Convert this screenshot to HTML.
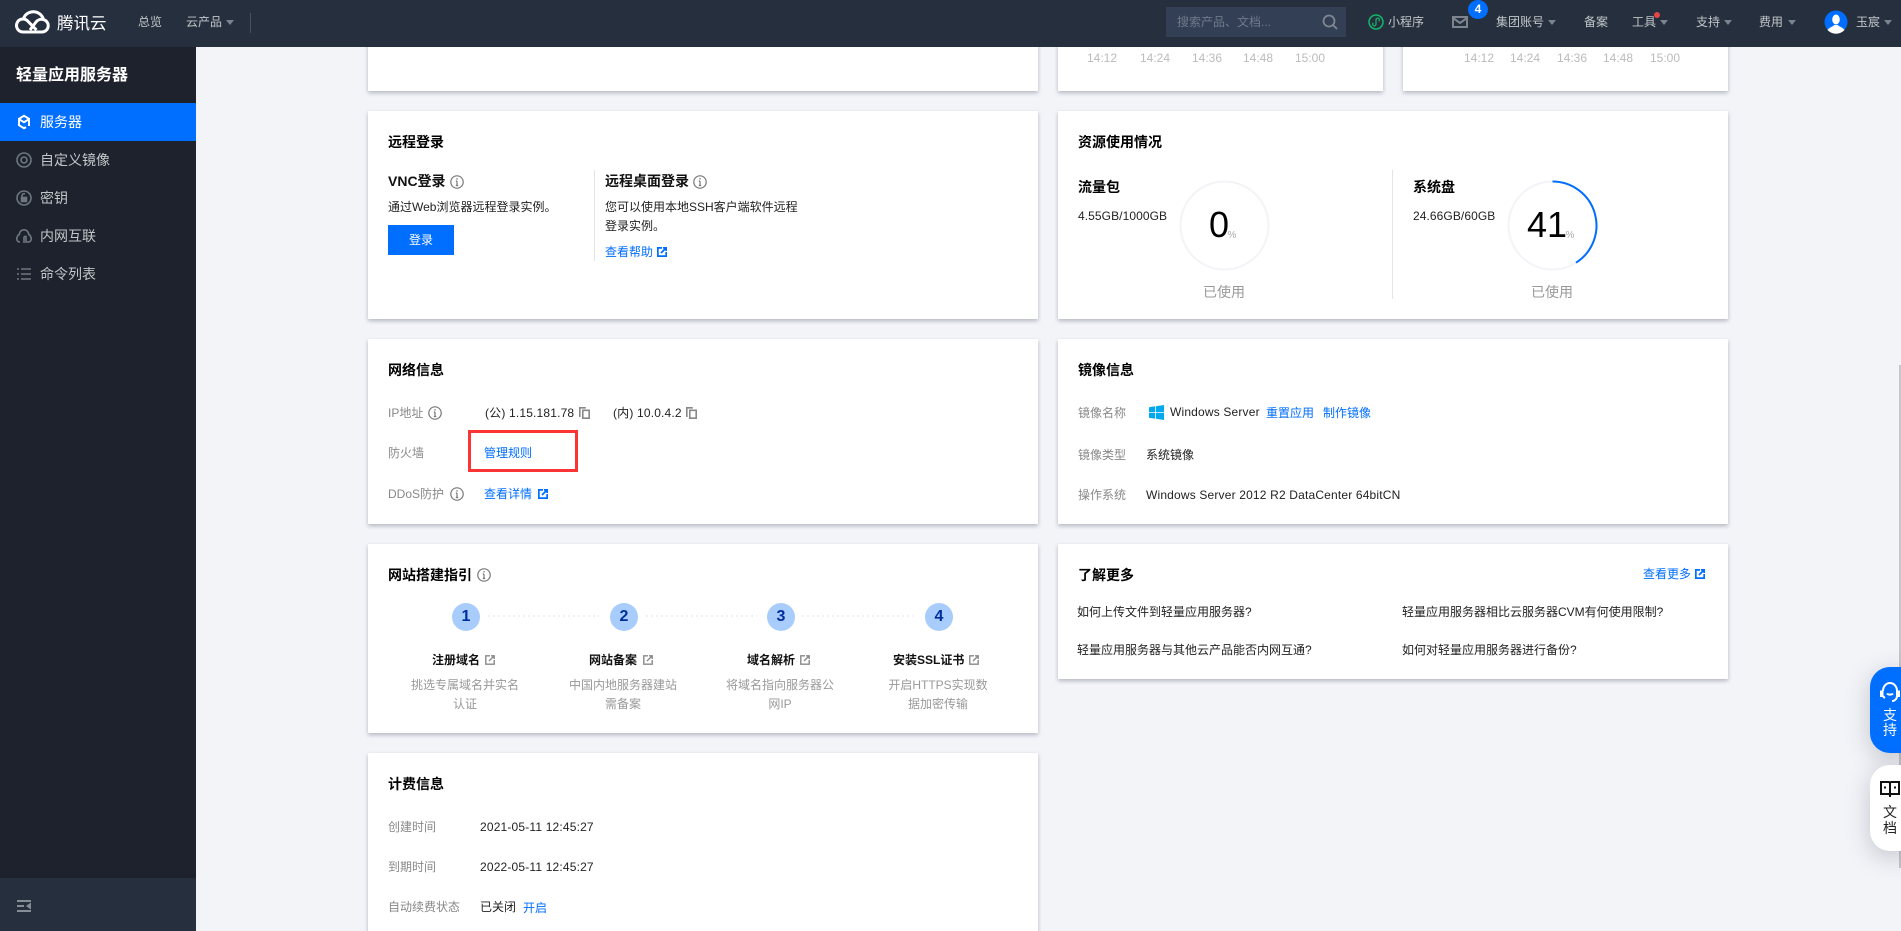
<!DOCTYPE html>
<html lang="zh-CN"><head><meta charset="utf-8"><title>轻量应用服务器</title>
<style>
*{box-sizing:border-box}
html,body{margin:0;padding:0;width:1901px;height:931px;overflow:hidden;background:#f2f4f8}
body{position:relative;font-family:"Liberation Sans","Noto Sans CJK SC",sans-serif;font-size:12px;color:#000}
.t{position:absolute;line-height:20px;height:20px;white-space:nowrap}
.c{transform:translateX(-50%);text-align:center}
.b{font-weight:700}
.h{font-weight:700;font-size:14px;color:#000}
.g{color:#888}
.d{color:#222}
.l{color:#006eff}
.n{color:#b8bcc2}
.ls{letter-spacing:.17px}
.card{position:absolute;background:#fff;box-shadow:0 2px 4px rgba(54,58,80,.32)}
.top{color:#c1c6c8}
.car{position:absolute;width:0;height:0;border-left:4px solid transparent;border-right:4px solid transparent;border-top:5px solid #7d838c;top:20px}
.nav{position:absolute;left:40px;font-size:14px;line-height:20px;color:#c1c6c8}
svg{position:absolute;display:block}
.tm{color:#bbb}
.v{position:absolute;font-size:14px;line-height:16px;text-align:center;width:30px;left:1875px}
</style></head><body>

<!-- content cards -->
<div class="card" style="left:368px;top:0;width:670px;height:91px"></div>
<div class="card" style="left:1058px;top:0;width:325px;height:91px"></div>
<div class="card" style="left:1403px;top:0;width:325px;height:91px"></div>
<div class="card" style="left:368px;top:111px;width:670px;height:208px"></div>
<div class="card" style="left:1058px;top:111px;width:670px;height:208px"></div>
<div class="card" style="left:368px;top:339px;width:670px;height:185px"></div>
<div class="card" style="left:1058px;top:339px;width:670px;height:185px"></div>
<div class="card" style="left:368px;top:544px;width:670px;height:189px"></div>
<div class="card" style="left:1058px;top:544px;width:670px;height:135px"></div>
<div class="card" style="left:368px;top:753px;width:670px;height:190px"></div>

<!-- top card chart times -->
<div class="t tm c" style="left:1102px;top:48px">14:12</div>
<div class="t tm c" style="left:1155px;top:48px">14:24</div>
<div class="t tm c" style="left:1207px;top:48px">14:36</div>
<div class="t tm c" style="left:1258px;top:48px">14:48</div>
<div class="t tm c" style="left:1310px;top:48px">15:00</div>
<div class="t tm c" style="left:1479px;top:48px">14:12</div>
<div class="t tm c" style="left:1525px;top:48px">14:24</div>
<div class="t tm c" style="left:1572px;top:48px">14:36</div>
<div class="t tm c" style="left:1618px;top:48px">14:48</div>
<div class="t tm c" style="left:1665px;top:48px">15:00</div>

<!-- 远程登录 -->
<div class="t h" style="left:388px;top:132px">远程登录</div>
<div class="t h" style="left:388px;top:171px;color:#111">VNC登录</div>
<svg style="left:450px;top:175px" width="14" height="14" viewBox="0 0 14 14" fill="none" stroke="#777" stroke-width="1.2"><circle cx="7" cy="7" r="6.200"/><path d="M7 6v4.500M5.800 10.500h2.400M5.800 6H7"/><path d="M7 3.200v1.300" stroke-width="1.400"/></svg>
<div class="t d" style="left:388px;top:197px">通过Web浏览器远程登录实例。</div>
<div style="position:absolute;left:388px;top:225px;width:66px;height:30px;background:#006eff;color:#fff;text-align:center;line-height:30px">登录</div>
<div style="position:absolute;left:594px;top:170px;width:1px;height:91px;background:#e3e4e8"></div>
<div class="t h" style="left:605px;top:171px;color:#111">远程桌面登录</div>
<svg style="left:693px;top:175px" width="14" height="14" viewBox="0 0 14 14" fill="none" stroke="#777" stroke-width="1.2"><circle cx="7" cy="7" r="6.200"/><path d="M7 6v4.500M5.800 10.500h2.400M5.800 6H7"/><path d="M7 3.200v1.300" stroke-width="1.400"/></svg>
<div class="t d" style="left:605px;top:197px">您可以使用本地SSH客户端软件远程</div>
<div class="t d" style="left:605px;top:216px">登录实例。</div>
<div class="t l" style="left:605px;top:242px">查看帮助</div>
<svg style="left:657px;top:247px" width="10" height="10" viewBox="0 0 10 10" fill="none" stroke="#006eff" stroke-width="1.800"><path d="M5 .8H.8v8.400h8.400V5M4 6l5-5M6 .8h3.200V4"/></svg>

<!-- 资源使用情况 -->
<div class="t h" style="left:1078px;top:132px">资源使用情况</div>
<div class="t h" style="left:1078px;top:177px">流量包</div>
<div class="t d" style="left:1078px;top:206px;letter-spacing:.08px">4.55GB/1000GB</div>
<svg style="left:1179px;top:180px" width="91" height="91" viewBox="0 0 91 91" fill="none"><circle cx="45.500" cy="45.500" r="44" stroke="#f3f4f7" stroke-width="2"/></svg>
<div class="t c" style="left:1219px;top:205px;font-size:36px;line-height:40px;height:40px;color:#000">0</div>
<div class="t c" style="left:1232px;top:226px;font-size:10px;color:#aaa">%</div>
<div class="t c" style="left:1224px;top:282px;font-size:14px;color:#999">已使用</div>
<div style="position:absolute;left:1392px;top:170px;width:1px;height:129px;background:#e3e4e8"></div>
<div class="t h" style="left:1413px;top:177px">系统盘</div>
<div class="t d" style="left:1413px;top:206px;letter-spacing:.08px">24.66GB/60GB</div>
<svg style="left:1507px;top:180px" width="91" height="91" viewBox="0 0 91 91" fill="none"><circle cx="45.500" cy="45.500" r="44" stroke="#f3f4f7" stroke-width="2"/><path d="M45.500 1.500A44 44 0 0 1 69 82.700" stroke="#006eff" stroke-width="2"/></svg>
<div class="t c" style="left:1547px;top:205px;font-size:36px;line-height:40px;height:40px;color:#000">41</div>
<div class="t c" style="left:1570px;top:226px;font-size:10px;color:#aaa">%</div>
<div class="t c" style="left:1552px;top:282px;font-size:14px;color:#999">已使用</div>

<!-- 网络信息 -->
<div class="t h" style="left:388px;top:360px">网络信息</div>
<div class="t g" style="left:388px;top:403px">IP地址</div>
<svg style="left:428px;top:406px" width="14" height="14" viewBox="0 0 14 14" fill="none" stroke="#777" stroke-width="1.2"><circle cx="7" cy="7" r="6.200"/><path d="M7 6v4.500M5.800 10.500h2.400M5.800 6H7"/><path d="M7 3.200v1.300" stroke-width="1.400"/></svg>
<div class="t d ls" style="left:485px;top:403px">(公) 1.15.181.78</div>
<svg style="left:579px;top:407px" width="11" height="12" viewBox="0 0 11 12" fill="none" stroke="#888" stroke-width="1.600"><path d="M.8 10V.8h6M3.800 3.300h6.400v7.900H3.800z"/></svg>
<div class="t d ls" style="left:613px;top:403px">(内) 10.0.4.2</div>
<svg style="left:686px;top:407px" width="11" height="12" viewBox="0 0 11 12" fill="none" stroke="#888" stroke-width="1.600"><path d="M.8 10V.8h6M3.800 3.300h6.400v7.900H3.800z"/></svg>
<div class="t g" style="left:388px;top:443px">防火墙</div>
<div class="t l" style="left:484px;top:443px">管理规则</div>
<div style="position:absolute;left:468px;top:430px;width:110px;height:42px;border:3px solid #fb3535"></div>
<div class="t g" style="left:388px;top:484px">DDoS防护</div>
<svg style="left:450px;top:487px" width="14" height="14" viewBox="0 0 14 14" fill="none" stroke="#777" stroke-width="1.2"><circle cx="7" cy="7" r="6.200"/><path d="M7 6v4.500M5.800 10.500h2.400M5.800 6H7"/><path d="M7 3.200v1.300" stroke-width="1.400"/></svg>
<div class="t l" style="left:484px;top:484px">查看详情</div>
<svg style="left:538px;top:489px" width="10" height="10" viewBox="0 0 10 10" fill="none" stroke="#006eff" stroke-width="1.800"><path d="M5 .8H.8v8.400h8.400V5M4 6l5-5M6 .8h3.200V4"/></svg>

<!-- 镜像信息 -->
<div class="t h" style="left:1078px;top:360px">镜像信息</div>
<div class="t g" style="left:1078px;top:403px">镜像名称</div>
<svg style="left:1149px;top:405px" width="15" height="15" viewBox="0 0 15 15" fill="#00a8f0"><path d="M0 2.200l6.200-.9v5.800H0zM7 1.200L15 0v7.100H7zM0 7.900h6.200v5.800L0 12.800zM7 7.900h8V15l-8-1.200z"/></svg>
<div class="t d ls" style="left:1170px;top:402px">Windows Server</div>
<div class="t l" style="left:1266px;top:403px">重置应用</div>
<div class="t l" style="left:1323px;top:403px">制作镜像</div>
<div class="t g" style="left:1078px;top:445px">镜像类型</div>
<div class="t d" style="left:1146px;top:445px">系统镜像</div>
<div class="t g" style="left:1078px;top:485px">操作系统</div>
<div class="t d ls" style="left:1146px;top:485px">Windows Server 2012 R2 DataCenter 64bitCN</div>

<!-- 网站搭建指引 -->
<div class="t h" style="left:388px;top:565px">网站搭建指引</div>
<svg style="left:477px;top:568px" width="14" height="14" viewBox="0 0 14 14" fill="none" stroke="#777" stroke-width="1.2"><circle cx="7" cy="7" r="6.200"/><path d="M7 6v4.500M5.800 10.500h2.400M5.800 6H7"/><path d="M7 3.200v1.300" stroke-width="1.400"/></svg>
<svg style="left:488px;top:615px" width="426" height="2" fill="none" stroke="#e0e2e6" stroke-dasharray="2 3"><path d="M0 1h111M158 1h111M314 1h111"/></svg>
<div class="t c b" style="left:466px;top:603px;width:28px;height:28px;border-radius:50%;background:#a8cdfd;line-height:28px;font-size:16px;color:#002d9c">1</div>
<div class="t c b" style="left:624px;top:603px;width:28px;height:28px;border-radius:50%;background:#a8cdfd;line-height:28px;font-size:16px;color:#002d9c">2</div>
<div class="t c b" style="left:781px;top:603px;width:28px;height:28px;border-radius:50%;background:#a8cdfd;line-height:28px;font-size:16px;color:#002d9c">3</div>
<div class="t c b" style="left:939px;top:603px;width:28px;height:28px;border-radius:50%;background:#a8cdfd;line-height:28px;font-size:16px;color:#002d9c">4</div>
<div class="t b" style="left:432px;top:650px;color:#111">注册域名</div>
<svg style="left:485px;top:655px" width="10" height="10" viewBox="0 0 10 10" fill="none" stroke="#888" stroke-width="1.400"><path d="M5 .8H.8v8.400h8.400V5M4 6l5-5M6 .8h3.200V4"/></svg>
<div class="t b" style="left:589px;top:650px;color:#111">网站备案</div>
<svg style="left:643px;top:655px" width="10" height="10" viewBox="0 0 10 10" fill="none" stroke="#888" stroke-width="1.400"><path d="M5 .8H.8v8.400h8.400V5M4 6l5-5M6 .8h3.200V4"/></svg>
<div class="t b" style="left:747px;top:650px;color:#111">域名解析</div>
<svg style="left:800px;top:655px" width="10" height="10" viewBox="0 0 10 10" fill="none" stroke="#888" stroke-width="1.400"><path d="M5 .8H.8v8.400h8.400V5M4 6l5-5M6 .8h3.200V4"/></svg>
<div class="t b" style="left:893px;top:650px;color:#111">安装SSL证书</div>
<svg style="left:969px;top:655px" width="10" height="10" viewBox="0 0 10 10" fill="none" stroke="#888" stroke-width="1.400"><path d="M5 .8H.8v8.400h8.400V5M4 6l5-5M6 .8h3.200V4"/></svg>
<div class="t g c" style="left:465px;top:675px;color:#999">挑选专属域名并实名</div>
<div class="t g c" style="left:465px;top:694px;color:#999">认证</div>
<div class="t g c" style="left:623px;top:675px;color:#999">中国内地服务器建站</div>
<div class="t g c" style="left:623px;top:694px;color:#999">需备案</div>
<div class="t g c" style="left:780px;top:675px;color:#999">将域名指向服务器公</div>
<div class="t g c" style="left:780px;top:694px;color:#999">网IP</div>
<div class="t g c" style="left:938px;top:675px;color:#999">开启HTTPS实现数</div>
<div class="t g c" style="left:938px;top:694px;color:#999">据加密传输</div>

<!-- 了解更多 -->
<div class="t h" style="left:1078px;top:565px">了解更多</div>
<div class="t l" style="left:1643px;top:564px">查看更多</div>
<svg style="left:1695px;top:569px" width="10" height="10" viewBox="0 0 10 10" fill="none" stroke="#006eff" stroke-width="1.800"><path d="M5 .8H.8v8.400h8.400V5M4 6l5-5M6 .8h3.200V4"/></svg>
<div class="t d" style="left:1077px;top:602px">如何上传文件到轻量应用服务器?</div>
<div class="t d" style="left:1402px;top:602px">轻量应用服务器相比云服务器CVM有何使用限制?</div>
<div class="t d" style="left:1077px;top:640px">轻量应用服务器与其他云产品能否内网互通?</div>
<div class="t d" style="left:1402px;top:640px">如何对轻量应用服务器进行备份?</div>

<!-- 计费信息 -->
<div class="t h" style="left:388px;top:774px">计费信息</div>
<div class="t g" style="left:388px;top:817px">创建时间</div>
<div class="t d ls" style="left:480px;top:817px">2021-05-11 12:45:27</div>
<div class="t g" style="left:388px;top:857px">到期时间</div>
<div class="t d ls" style="left:480px;top:857px">2022-05-11 12:45:27</div>
<div class="t g" style="left:388px;top:897px">自动续费状态</div>
<div class="t d" style="left:480px;top:897px">已关闭</div>
<div class="t l" style="left:523px;top:898px">开启</div>

<!-- sidebar -->
<div style="position:absolute;left:0;top:47px;width:196px;height:884px;background:#1e222d"></div>
<div style="position:absolute;left:0;top:878px;width:196px;height:53px;background:#262f3e"></div>
<div class="t b" style="left:16px;top:66px;font-size:16px;color:#fff">轻量应用服务器</div>
<div style="position:absolute;left:0;top:103px;width:196px;height:38px;background:#006eff"></div>
<svg style="left:16px;top:114px" width="16" height="16" viewBox="0 0 16 16" fill="none" stroke="#fff" stroke-width="2"><path d="M13 12V4.800L8 1.800 3 4.800v6.400l5 3 2-1M3.500 5.500L8 8.200l4.500-2.700"/></svg>
<div class="nav" style="top:112px;color:#fff">服务器</div>
<svg style="left:16px;top:152px" width="16" height="16" viewBox="0 0 16 16" fill="none" stroke="#6e7681" stroke-width="1.600"><circle cx="8" cy="8" r="7"/><circle cx="8" cy="8" r="3"/></svg>
<div class="nav" style="top:150px">自定义镜像</div>
<svg style="left:16px;top:190px" width="16" height="16" viewBox="0 0 16 16" fill="none" stroke="#6e7681" stroke-width="1.600"><circle cx="8" cy="8" r="7"/><rect x="5.500" y="7.500" width="5" height="4" fill="#6e7681"/><path d="M6 7.500V5.500a2 2 0 0 1 3-1.500"/></svg>
<div class="nav" style="top:188px">密钥</div>
<svg style="left:16px;top:228px" width="16" height="16" viewBox="0 0 16 16" fill="none" stroke="#6e7681" stroke-width="1.600"><path d="M4 14a3.200 3.200 0 0 1-2.700-5 3 3 0 0 1 2-2.500 4.700 4.700 0 0 1 9.400 0 3 3 0 0 1 2 2.500 3.200 3.200 0 0 1-2.700 5H10V8.500H8M8 8.500V15"/></svg>
<div class="nav" style="top:226px">内网互联</div>
<svg style="left:17px;top:268px" width="14" height="12" viewBox="0 0 14 12" fill="none" stroke="#6e7681" stroke-width="1.600"><path d="M0 1h2M4 1h10M0 6h2M4 6h10M0 11h2M4 11h10"/></svg>
<div class="nav" style="top:264px">命令列表</div>
<svg style="left:17px;top:900px" width="14" height="12" viewBox="0 0 14 12" fill="#868d97"><rect width="14" height="2"/><rect y="5" width="7" height="2"/><rect y="10" width="14" height="2"/><path d="M9 6l5-3.500v7z"/></svg>

<!-- header -->
<div style="position:absolute;left:0;top:0;width:1901px;height:47px;background:#262f3e"></div>
<svg style="left:15px;top:10px" width="35" height="24" viewBox="0 0 35 24" fill="none" stroke="#fff" stroke-width="3"><path d="M8 22h19a6.300 6.300 0 0 0 1.500-12.400A10.500 10.500 0 0 0 8.500 8.500M8 22a6.500 6.500 0 1 1 4.500-11.200L21.500 20M28.500 9.600a7 7 0 0 0-7.500 2.400L15 20"/></svg>
<div class="t" style="left:57px;top:14px;font-size:16.500px;color:#fff">腾讯云</div>
<div class="t top" style="left:138px;top:12px">总览</div>
<div class="t top" style="left:186px;top:12px">云产品</div>
<div class="car" style="left:226px"></div>
<div style="position:absolute;left:250px;top:13px;width:1px;height:20px;background:#4a5260"></div>
<div style="position:absolute;left:1166px;top:7px;width:180px;height:30px;background:#323f55"></div>
<div class="t" style="left:1177px;top:12px;color:#6f7a8a">搜索产品、文档...</div>
<svg style="left:1322px;top:14px" width="16" height="16" viewBox="0 0 16 16" fill="none" stroke="#7f8791" stroke-width="1.800"><circle cx="7" cy="7" r="5.500"/><path d="M11 11l4 4"/></svg>
<svg style="left:1368px;top:14px" width="16" height="16" viewBox="0 0 16 16" fill="none" stroke="#12b76a" stroke-width="1.500"><circle cx="8" cy="8" r="7"/><path d="M5.300 8.800a1.700 1.700 0 1 0 2.700 1.500V5.700a1.700 1.700 0 1 1 2.700 1.500" stroke-width="1.200"/></svg>
<div class="t top" style="left:1388px;top:12px">小程序</div>
<svg style="left:1452px;top:16px" width="16" height="12" viewBox="0 0 16 12" fill="none" stroke="#7d848e" stroke-width="2"><rect x="1" y="1" width="14" height="10"/><path d="M1 2l7 5 7-5"/></svg>
<div style="position:absolute;left:1468px;top:0;width:20px;height:19px;border-radius:50%;background:#006eff;color:#fff;font-weight:700;font-size:12px;line-height:19px;text-align:center">4</div>
<div class="t top" style="left:1496px;top:12px">集团账号</div>
<div class="car" style="left:1548px"></div>
<div class="t top" style="left:1584px;top:12px">备案</div>
<div class="t top" style="left:1632px;top:12px">工具</div>
<div style="position:absolute;left:1654px;top:12px;width:6px;height:6px;border-radius:50%;background:#e54545"></div>
<div class="car" style="left:1660px"></div>
<div class="t top" style="left:1696px;top:12px">支持</div>
<div class="car" style="left:1724px"></div>
<div class="t top" style="left:1759px;top:12px">费用</div>
<div class="car" style="left:1788px"></div>
<svg style="left:1824px;top:10px" width="24" height="24" viewBox="0 0 24 24"><circle cx="12" cy="12" r="11.500" fill="#006eff"/><ellipse cx="12" cy="9.500" rx="3.800" ry="5" fill="#fff"/><path d="M3.500 20c2-3 6-3.500 6.500-5h4c.5 1.500 4.500 2 6.500 5a11.500 11.500 0 0 1-17 0z" fill="#fff"/></svg>
<div class="t top" style="left:1856px;top:12px">玉宸</div>
<div class="car" style="left:1884px"></div>

<!-- scrollbar + floats -->
<div style="position:absolute;left:1899px;top:365px;width:2px;height:503px;background:#c5c6c8"></div>
<div style="position:absolute;left:1870px;top:667px;width:40px;height:86px;border-radius:20px 0 0 20px;background:#006eff;box-shadow:0 6px 24px rgba(54,58,80,.25)"></div>
<div style="position:absolute;left:1870px;top:765px;width:40px;height:86px;border-radius:20px 0 0 20px;background:#fff;box-shadow:0 6px 24px rgba(54,58,80,.25)"></div>
<svg style="left:1880px;top:682px" width="20" height="20" viewBox="0 0 20 20" fill="none" stroke="#fff" stroke-width="2"><path d="M3 9a7 8 0 0 1 14 0v5a5 5 0 0 1-5 5M3 14c.5 1 1 1.500 2 2M7 11.500c1 1.500 5 1.500 6 0"/><rect x="0" y="8.500" width="3.500" height="6.500" fill="#fff" stroke="none"/><rect x="16.500" y="8.500" width="3.500" height="6.500" fill="#fff" stroke="none"/></svg>
<div class="v" style="top:707px;color:#fff">支</div>
<div class="v" style="top:722px;color:#fff">持</div>
<svg style="left:1880px;top:781px" width="20" height="17" viewBox="0 0 20 17" fill="none" stroke="#111" stroke-width="2"><path d="M1 1h8l1 1 1-1h8v12h-8l-1 1-1-1H1zM10 2v14"/><path d="M4 6.500h2M14 6.500h2" stroke-width="2"/></svg>
<div class="v" style="top:804px;color:#222">文</div>
<div class="v" style="top:820px;color:#222">档</div>
</body></html>
